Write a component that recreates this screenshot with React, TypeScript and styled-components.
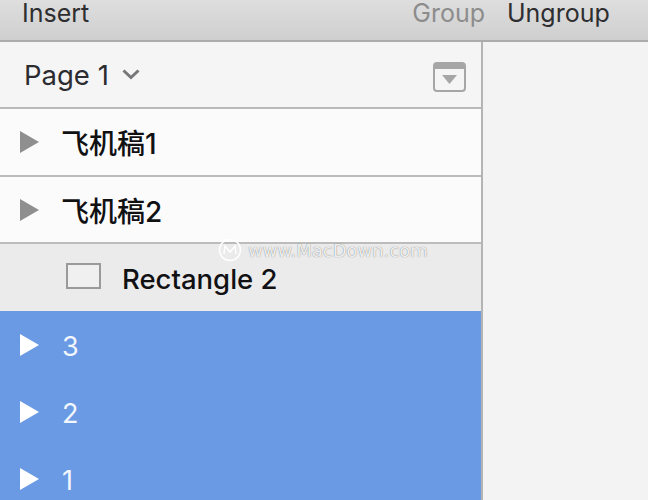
import styled, { createGlobalStyle } from "styled-components";

const Global = createGlobalStyle`
  html, body {
    margin: 0;
    padding: 0;
    height: 100%;
    overflow: hidden;
    background: #f3f3f3;
  }
  body {
    font-family: "Inter", "Noto Sans CJK SC", sans-serif;
  }
`;

const Page = styled.div`
  position: relative;
  width: 648px;
  height: 500px;
  display: flex;
  flex-direction: column;
  overflow: hidden;
`;

const Toolbar = styled.div`
  flex: none;
  height: 40px;
  display: flex;
  align-items: flex-start;
  background: linear-gradient(#dedede, #cfcfcf);
  border-bottom: 2px solid #acacac;
  font-size: 25px;
  line-height: 27px;
`;

const ToolLabel = styled.span<{ $dim?: boolean; $left: number }>`
  margin-left: ${(p) => p.$left}px;
  color: ${(p) => (p.$dim ? "#8c8c8c" : "#2e2e30")};
`;

const Body = styled.div`
  flex: 1;
  display: flex;
  min-height: 0;
`;

const Sidebar = styled.div`
  flex: none;
  width: 481px;
  display: flex;
  flex-direction: column;
  border-right: 2px solid #b4b4b4;
`;

const Main = styled.div`
  flex: 1;
  background: #f3f3f3;
`;

const PageHeader = styled.div`
  flex: none;
  height: 65px;
  display: flex;
  align-items: center;
  padding: 0 15px 0 24px;
  background: #f5f5f5;
  border-bottom: 2px solid #b9b9b9;
  font-size: 27.5px;
  color: #2c2c30;
`;

const PageName = styled.span`
  margin-right: 13px;
`;

const HeaderSpacer = styled.div`
  flex: 1;
`;

const Row = styled.div<{ $tone: "plain" | "group" | "blue"; $height: number }>`
  flex: none;
  height: ${(p) => p.$height}px;
  display: flex;
  align-items: center;
  padding-left: 20px;
  font-size: 27px;
  background: ${(p) =>
    p.$tone === "plain" ? "#fbfbfb" : p.$tone === "group" ? "#ebebeb" : "#6a9ae4"};
  color: ${(p) => (p.$tone === "blue" ? "#f2f6fd" : "#111114")};
  border-bottom: ${(p) => (p.$tone === "plain" ? "2px solid #bcbcbc" : "none")};
`;

const RowName = styled.span<{ $cjk?: boolean }>`
  margin-left: ${(p) => (p.$cjk ? 22 : 23)}px;
  padding-top: ${(p) => (p.$cjk ? 0 : 4)}px;
  font-size: ${(p) => (p.$cjk ? "28px" : "27px")};
  font-weight: ${(p) => (p.$cjk ? 500 : 400)};
`;

const ShapeIcon = styled.span`
  box-sizing: border-box;
  width: 35px;
  height: 26px;
  margin: 0 0 3px 46px;
  border: 2px solid #9a9a9a;
  background: #f0f0f0;
`;

const ShapeName = styled.span`
  margin-left: 21px;
  padding-top: 2px;
  font-size: 27.5px;
  font-weight: 500;
`;

const CollapseWrap = styled.span`
  display: flex;
  padding-top: 4px;
`;

const Watermark = styled.div`
  position: absolute;
  left: 218px;
  top: 238px;
  display: flex;
  align-items: center;
  gap: 6px;
  font-family: "DejaVu Sans", sans-serif;
  font-size: 18px;
  color: rgba(255, 255, 255, 0.9);
  text-shadow: 0 0 1px rgba(90, 90, 90, 0.9);
`;

const Arrow = ({ color }: { color: string }) => (
  <svg width="19" height="22" viewBox="0 0 19 22">
    <path d="M0 0 L19 11 L0 22 Z" fill={color} />
  </svg>
);

const Chevron = () => (
  <svg width="18" height="11" viewBox="0 0 18 11">
    <path d="M1.5 1.5 L9 8.5 L16.5 1.5" fill="none" stroke="#77777a" strokeWidth="3" />
  </svg>
);

const CollapseIcon = () => (
  <svg width="33" height="30" viewBox="0 0 33 30">
    <rect x="1" y="1" width="31" height="28" rx="3" fill="#f5f5f5" stroke="#a6a6a6" strokeWidth="2" />
    <rect x="1" y="1" width="31" height="6" fill="#a6a6a6" />
    <path d="M9 13 L24 13 L16.5 22 Z" fill="#a6a6a6" />
  </svg>
);

const WatermarkLogo = () => (
  <svg width="24" height="24" viewBox="0 0 24 24">
    <circle cx="12" cy="12" r="10.5" fill="none" stroke="#fff" strokeWidth="1.5" />
    <path d="M6 16 L7 8 L12 14 L17 8 L18 16" fill="none" stroke="#fff" strokeWidth="1.5" />
  </svg>
);

export default function App() {
  return (
    <Page>
      <Global />
      <Toolbar>
        <ToolLabel $left={22}>Insert</ToolLabel>
        <ToolLabel $dim $left={323}>Group</ToolLabel>
        <ToolLabel $left={22}>Ungroup</ToolLabel>
      </Toolbar>
      <Body>
        <Sidebar>
          <PageHeader>
            <PageName>Page 1</PageName>
            <Chevron />
            <HeaderSpacer />
            <CollapseWrap>
              <CollapseIcon />
            </CollapseWrap>
          </PageHeader>
          <Row $tone="plain" $height={66}>
            <Arrow color="#8f8f8f" />
            <RowName $cjk>飞机稿1</RowName>
          </Row>
          <Row $tone="plain" $height={65}>
            <Arrow color="#8f8f8f" />
            <RowName $cjk>飞机稿2</RowName>
          </Row>
          <Row $tone="group" $height={67}>
            <ShapeIcon />
            <ShapeName>Rectangle 2</ShapeName>
          </Row>
          <Row $tone="blue" $height={67}>
            <Arrow color="#ffffff" />
            <RowName>3</RowName>
          </Row>
          <Row $tone="blue" $height={67}>
            <Arrow color="#ffffff" />
            <RowName>2</RowName>
          </Row>
          <Row $tone="blue" $height={67}>
            <Arrow color="#ffffff" />
            <RowName>1</RowName>
          </Row>
        </Sidebar>
        <Main />
      </Body>
      <Watermark>
        <WatermarkLogo />
        www.MacDown.com
      </Watermark>
    </Page>
  );
}
